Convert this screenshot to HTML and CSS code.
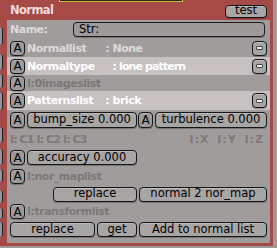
FILE: index.html
```html
<!DOCTYPE html>
<html lang="en">

<head>
    <meta charset="UTF-8">
    <title>Normal</title>
    <link rel="stylesheet" href="styles.css">
</head>

<body>

    <div class="panel">
        <div class="topline">
            <div class="marker"></div>
        </div>
        <div class="frame">
            <div class="gutter">
                <div class="bit"></div>
                <div class="bit"></div>
                <div class="bit"></div>
                <div class="bit"></div>
                <div class="bit"></div>
                <div class="bit"></div>
                <div class="bit"></div>
                <div class="bit"></div>
                <div class="bit"></div>
                <div class="bit"></div>
            </div>
            <div class="main">
                <div class="head">
                    <span class="title">Normal</span>
                    <span class="btn test">test</span>
                </div>
                <div class="content">
                    <div class="row row-name">
                        <span class="label light">Name:</span>
                        <span class="field">Str:</span>
                    </div>
                    <div class="row row-list">
                        <span class="btn abtn">A</span>
                        <span class="label light">Normallist</span>
                        <span class="label light val">: None</span>
                        <span class="btn minus"><i></i></span>
                    </div>
                    <div class="row row-list band">
                        <span class="btn abtn">A</span>
                        <span class="label white">Normaltype</span>
                        <span class="label white val wide">: lone pattern</span>
                        <span class="btn minus"><i></i></span>
                    </div>
                    <div class="row row-sub">
                        <span class="btn abtn">A</span>
                        <span class="label dim">I:0imageslist</span>
                    </div>
                    <div class="row row-pat band">
                        <span class="btn abtn">A</span>
                        <span class="label white">Patternslist</span>
                        <span class="label white val tight">: brick</span>
                        <span class="btn minus"><i></i></span>
                    </div>
                    <div class="row row-num">
                        <span class="btn abtn">A</span>
                        <span class="btn half">bump_size 0.000</span>
                        <span class="btn abtn a2">A</span>
                        <span class="btn grow">turbulence 0.000</span>
                    </div>
                    <div class="row row-coords">
                        <span class="label dim coords">I: C1 I: C2 I: C3</span>
                        <span class="label dim axes">I:X I:Y I:Z</span>
                    </div>
                    <div class="row row-acc">
                        <span class="btn abtn">A</span>
                        <span class="btn half">accuracy 0.000</span>
                    </div>
                    <div class="row row-sub2">
                        <span class="btn abtn">A</span>
                        <span class="label dim">I:nor_maplist</span>
                    </div>
                    <div class="row row-btns">
                        <span class="btn replace-map">replace</span>
                        <span class="btn grow">normal 2 nor_map</span>
                    </div>
                    <div class="row row-sub3">
                        <span class="btn abtn">A</span>
                        <span class="label dim">I:transformlist</span>
                    </div>
                    <div class="row row-last">
                        <span class="btn replace">replace</span>
                        <span class="btn get">get</span>
                        <span class="btn grow">Add to normal list</span>
                    </div>
                </div>
            </div>
        </div>
    </div>

</body>

</html>
```

FILE: styles.css
```css
body {
    margin: 0;
    background: #a09a9a;
    font-family: "DejaVu Sans", sans-serif;
    font-size: 11.5px;
    line-height: 1;
}

.panel {
    width: 273px;
    height: 246px;
    background: #a64a48;
    display: flex;
    flex-direction: column;
}

/* thin strip at the very top */
.topline {
    height: 2px;
    padding-left: 60px;
}

.marker {
    width: 122px;
    height: 1px;
    background: #2c2818;
    border-bottom: 1px solid #c8b830;
    box-shadow: -1px 0 0 #d8c830, 1px 0 0 #d8c830;
}

.frame {
    flex: 1;
    display: flex;
}

/* cut-off widgets of the neighbouring panel */
.gutter {
    width: 7px;
    padding-top: 25px;
    display: flex;
    flex-direction: column;
}

.bit {
    width: 2px;
    height: 16px;
    background: #9a9494;
    border-right: 1px solid #1c1c1c;
    border-radius: 0 3px 3px 0;
    margin-bottom: 4px;
}

.bit:nth-child(1) { height: 18px; margin-bottom: 9px; }
.bit:nth-child(3) { height: 14px; }
.bit:nth-child(4) { height: 18px; margin-bottom: 17px; }
.bit:nth-child(5) { margin-bottom: 6px; }
.bit:nth-child(7) { height: 13px; margin-bottom: 8px; }
.bit:nth-child(8) { height: 13px; margin-bottom: 5px; }
.bit:nth-child(9) { height: 11px; margin-bottom: 3px; }
.bit:nth-child(10) { height: 15px; }

.main {
    flex: 1;
    display: flex;
    flex-direction: column;
    margin: 0 3px 3px 0;
}

.head {
    height: 18px;
    display: flex;
    align-items: center;
    padding: 0 3px;
}

.title {
    font-weight: bold;
    font-size: 11.5px;
    letter-spacing: -0.6px;
    color: #f0dcdc;
}

.content {
    flex: 1;
    background: #a19c9c;
    padding: 0 3px;
}

.row {
    display: flex;
    align-items: center;
}

.row-name { height: 19px; }
.row-list { height: 18px; }
.row-sub { height: 16px; }
.row-pat { height: 19px; }
.row-num { height: 20px; }
.row-coords { height: 18px; justify-content: space-between; padding-right: 3px; }
.row-acc { height: 19px; }
.row-sub2 { height: 18px; }
.row-btns { height: 18px; }
.row-sub3 { height: 17px; }
.row-last { height: 19px; }

.band {
    background: #c7c1c1;
    margin: 0 -3px;
    padding: 0 3px;
}

.label {
    font-weight: bold;
    font-size: 11px;
    letter-spacing: -0.5px;
    white-space: pre;
}

.light { color: #dedada; }
.white { color: #ffffff; }
.dim { color: #7d7777; }

.coords {
    letter-spacing: -0.9px;
}

.axes {
    letter-spacing: 1px;
    word-spacing: 3px;
}

.row-list .label:nth-child(2),
.row-pat .label:nth-child(2),
.row-sub .label,
.row-sub2 .label,
.row-sub3 .label {
    margin-left: 2px;
}

.val {
    margin-left: 19px;
}

.val.wide {
    margin-left: 18px;
    letter-spacing: -0.9px;
}

.val.tight {
    margin-left: 12px;
}

.btn {
    box-sizing: border-box;
    height: 15px;
    display: flex;
    align-items: center;
    justify-content: center;
    background: #a8a5a5;
    border: 1px solid #161616;
    border-radius: 4px;
    box-shadow: inset 0 1px 0 rgba(255, 255, 255, 0.25), 0 1px 0 rgba(0, 0, 0, 0.25);
    color: #000;
    white-space: pre;
}

.test {
    margin-left: auto;
    width: 42px;
    height: 13px;
}

.abtn {
    width: 15px;
    font-size: 12px;
    background: #9c9a9a;
}

.minus {
    width: 15px;
    margin-left: auto;
}

.minus i {
    width: 5px;
    height: 2px;
    background: #f4f4f4;
    border: 1px solid #444;
    border-radius: 1px;
}

.field {
    box-sizing: border-box;
    width: 192px;
    height: 15px;
    margin: 0 2px 0 auto;
    padding-left: 5px;
    display: flex;
    align-items: center;
    background: #9e9a9a;
    border: 1px solid #1a1a1a;
    border-radius: 4px;
    box-shadow: 0 1px 0 rgba(0, 0, 0, 0.25);
    color: #000;
}

.half {
    width: 110px;
    margin-left: 2px;
}

.row-num .btn {
    height: 16px;
}

.a2 {
    margin-left: 1px;
}

.grow {
    flex: 1;
    margin-left: 2px;
}

.replace-map {
    width: 84px;
    margin-left: 43px;
}

.replace {
    width: 85px;
}

.get {
    width: 40px;
    margin-left: 2px;
}
```
